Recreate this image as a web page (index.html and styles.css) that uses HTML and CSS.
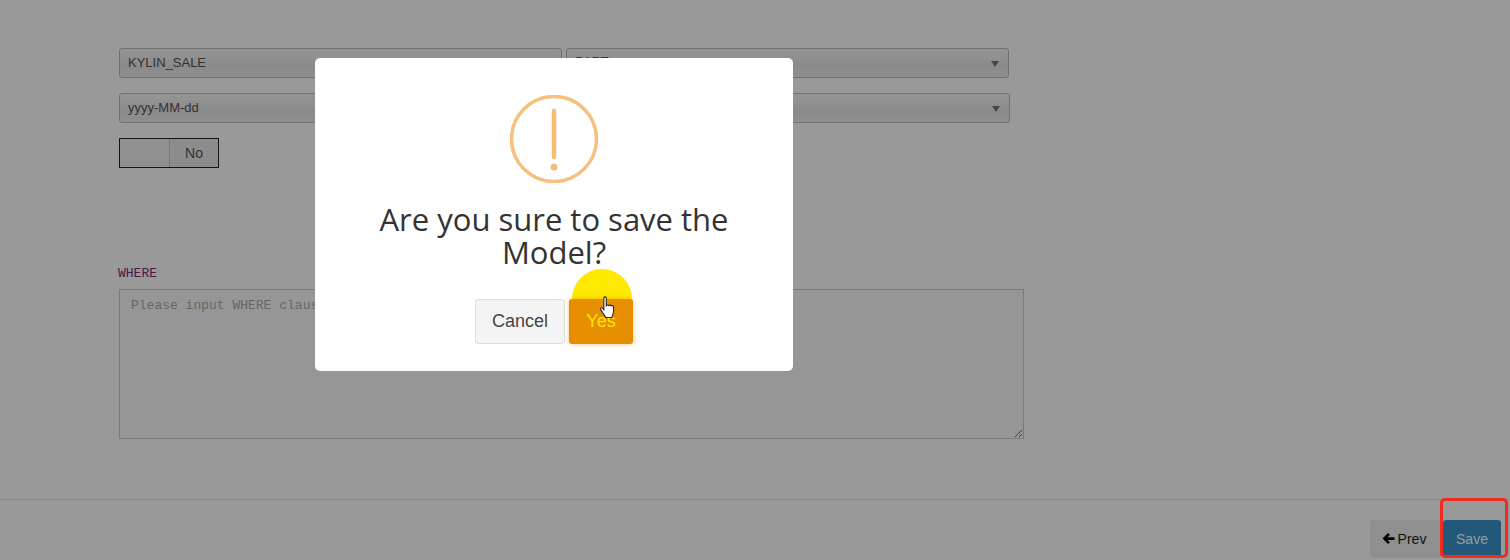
FILE: index.html
```html
<!DOCTYPE html>
<html lang="en">
<head>
    <meta charset="UTF-8">
    <title>Save Model</title>
    <link rel="stylesheet" href="styles.css">
</head>
<body>
    <div class="page">
        <div class="form-area">
            <div class="select-row">
                <div class="fake-select">KYLIN_SALE</div>
                <div class="fake-select has-caret peek">PART</div>
            </div>
            <div class="select-row second">
                <div class="fake-select">yyyy-MM-dd</div>
                <div class="fake-select has-caret"></div>
            </div>
            <div class="toggle">
                <span class="toggle-off"></span>
                <span class="toggle-on">No</span>
            </div>
            <div class="where-label">WHERE</div>
            <textarea class="where-input" placeholder="Please input WHERE clause here"></textarea>
        </div>
        <div class="footer">
            <button type="button" class="btn-prev"><svg class="arrow" viewBox="0 0 14 12"><path d="M6.500 0 .5 6l6 6 2-2L6 7.500h7.500v-3H6L8.500 2z"/></svg>Prev</button>
            <button type="button" class="btn-save">Save</button>
        </div>
    </div>

    <div class="overlay"></div>
    <div class="red-box"></div>

    <div class="modal">
        <svg class="alert-icon" viewBox="0 0 88 88">
            <circle cx="44" cy="44" r="42.500" fill="none" stroke="#f7c07f" stroke-width="3.500"/>
            <line x1="44" y1="16" x2="44" y2="62" stroke="#f8bb6f" stroke-width="4.500" stroke-linecap="round"/>
            <circle cx="44" cy="72" r="3.500" fill="#f5bd7c"/>
        </svg>
        <h2 class="modal-title">Are you sure to save the Model?</h2>
        <div class="modal-buttons">
            <button type="button" class="btn-cancel">Cancel</button>
            <button type="button" class="btn-yes">Yes</button>
        </div>
        <div class="click-spot"></div>
        <svg class="hand" viewBox="0 0 16 24">
            <path d="M4.500 1.800c0-1.300 2.300-1.300 2.300 0v7.400c.6-.8 2-.8 2.400 0 .6-.7 2-.6 2.300.3.700-.5 2.100-.3 2.300.9.200 2.500.1 5.300-.6 7.300-.3 1-.8 1.800-1 3H6.200c-.3-1.500-1.500-2.700-2.500-4.200-.8-1.200-1.900-2.800-2.300-3.800-.4-1.200 1-1.900 1.900-1l1.200 1.500z" fill="#fff" stroke="#222" stroke-width="1"/>
        </svg>
    </div>
</body>
</html>
```

FILE: styles.css
```css
html, body {
    margin: 0;
    height: 100%;
    overflow: hidden;
}

body {
    font-family: "Liberation Sans", Arial, sans-serif;
    color: #222;
    background: #fff;
}

.page {
    width: 1510px;
    height: 560px;
    display: flex;
    flex-direction: column;
    background: #fff;
}

.form-area {
    flex: 0 0 499px;
    box-sizing: border-box;
    padding: 48px 0 0 119px;
}

.select-row {
    display: flex;
    gap: 4px;
    width: 890px;
}
.select-row.second {
    margin-top: 15px;
    width: 891px;
}

.fake-select {
    flex: 1 1 0;
    box-sizing: border-box;
    height: 30px;
    line-height: 27px;
    padding-left: 8px;
    font-size: 13px;
    color: #555;
    border: 1px solid #bbb;
    border-radius: 3px;
    background: linear-gradient(#f8f8f8 0%, #f0f0f0 35%, #e6e6e6 60%, #eee 100%);
    position: relative;
}
.fake-select.peek {
    line-height: 25px;
}
.has-caret::after {
    content: "";
    position: absolute;
    right: 9px;
    top: 12px;
    border-left: 4px solid transparent;
    border-right: 4px solid transparent;
    border-top: 6px solid #777;
}

.toggle {
    display: flex;
    box-sizing: border-box;
    width: 100px;
    height: 30px;
    margin-top: 15px;
    border: 1px solid #222;
    background: #f0f0f0;
}
.toggle-off {
    flex: 0 0 49px;
    border-right: 1px solid #c4c4c4;
}
.toggle-on {
    flex: 1;
    text-align: center;
    line-height: 28px;
    font-size: 14px;
    color: #555;
    background: #e9e9e9;
}

.where-label {
    margin: 98px 0 0 -1px;
    height: 23px;
    line-height: 15px;
    font-family: "Liberation Mono", monospace;
    font-size: 13px;
    color: #7a2b7a;
}

.where-input {
    display: block;
    box-sizing: border-box;
    width: 905px;
    height: 150px;
    padding: 8px 11px;
    border: 1px solid #ccc;
    background: #fbfbfb;
    font-family: "Liberation Mono", monospace;
    font-size: 13px;
}
.where-input::placeholder {
    color: #aaa;
}

.footer {
    flex: 1;
    display: flex;
    justify-content: flex-end;
    align-items: flex-start;
    gap: 2px;
    padding: 20px 9px 0 0;
    border-top: 1px solid #e2e2e2;
}

.btn-prev, .btn-save {
    height: 38px;
    border: none;
    border-radius: 3px;
    font-family: inherit;
    font-size: 14px;
}
.btn-prev {
    width: 71px;
    padding: 0;
    background: #eee;
    color: #222;
}
.arrow {
    width: 13px;
    height: 11px;
    margin-right: 3px;
    margin-left: -3px;
}
.btn-save {
    width: 58px;
    background: #3a94cc;
    color: #fff;
}

.overlay {
    position: absolute;
    left: 0;
    top: 0;
    width: 1510px;
    height: 560px;
    background: rgba(0, 0, 0, 0.4);
}

.red-box {
    position: absolute;
    left: 1440px;
    top: 498px;
    width: 62px;
    height: 54px;
    border: 3px solid #f22c1c;
    border-radius: 5px;
}

.modal {
    position: absolute;
    left: 315px;
    top: 58px;
    width: 478px;
    height: 313px;
    display: flex;
    flex-direction: column;
    align-items: center;
    background: #fff;
    border-radius: 5px;
}

.alert-icon {
    width: 88px;
    height: 88px;
    margin-top: 37px;
}

.modal-title {
    width: 400px;
    margin: 20px 0 0 0;
    font-family: "Open Sans", sans-serif;
    font-size: 31px;
    font-weight: 400;
    line-height: 33px;
    text-align: center;
    color: #333;
}

.modal-buttons {
    display: flex;
    gap: 4px;
    margin-top: 30px;
    position: relative;
    z-index: 1;
}

.btn-cancel, .btn-yes {
    height: 45px;
    border-radius: 3px;
    font-family: "Liberation Sans", Arial, sans-serif;
    font-size: 18px;
}
.btn-cancel {
    width: 90px;
    border: 1px solid #ddd;
    background: #f4f4f4;
    color: #444;
}
.btn-yes {
    width: 64px;
    border: none;
    background: #e68d00;
    color: #ffe800;
    box-shadow: 0 0 5px rgba(230, 141, 0, 0.5);
}

.click-spot {
    position: absolute;
    left: 257px;
    top: 211px;
    width: 60px;
    height: 30px;
    border-radius: 30px 30px 0 0;
    background: #fee900;
}

.hand {
    position: absolute;
    left: 284px;
    top: 238px;
    width: 17px;
    height: 25px;
    z-index: 2;
}
```
